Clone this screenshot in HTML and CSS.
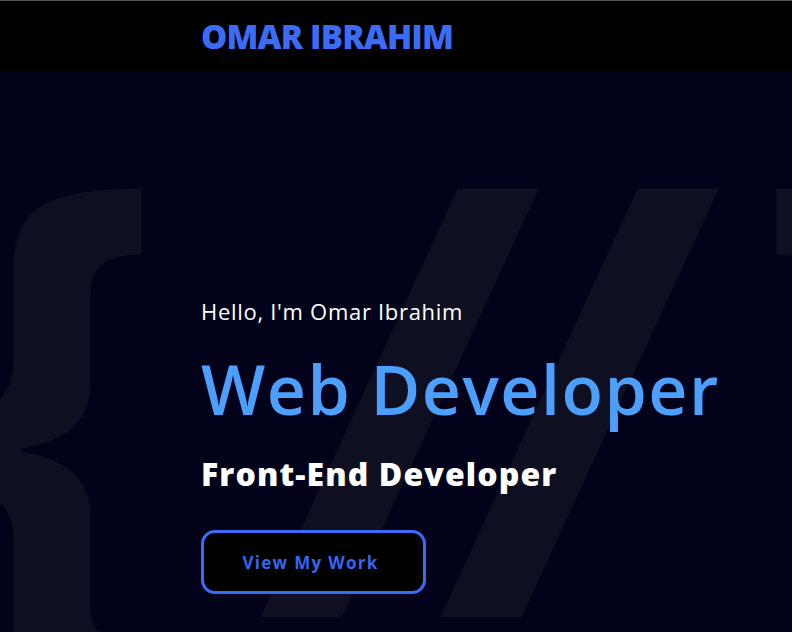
FILE: index.html
```html
<!DOCTYPE html>
<html lang="en">
<head>
<meta charset="utf-8">
<title>Omar Ibrahim</title>
<link rel="stylesheet" href="styles.css">
</head>
<body>
<header class="site-header">
  <div class="container">
    <a class="logo" href="#">OMAR IBRAHIM</a>
  </div>
</header>
<section class="hero">
  <div class="hero-bg" aria-hidden="true"><span class="bg-open">{</span><span class="bg-slash bg-slash-1">/</span><span class="bg-slash bg-slash-2">/</span><span class="bg-close">}</span></div>
  <div class="container hero-content">
    <p class="hello">Hello, I'm Omar Ibrahim</p>
    <h1 class="title">Web Developer</h1>
    <h2 class="subtitle">Front-End Developer</h2>
    <a class="btn" href="#">View My Work</a>
  </div>
</section>
</body>
</html>
```
FILE: styles.css
```css
* { box-sizing: border-box; }
html, body { margin: 0; padding: 0; }
body {
  background: #02021a;
  font-family: "Open Sans", "Noto Sans", sans-serif;
  overflow: hidden;
  height: 632px;
}
.container { padding-left: 201px; }
.site-header {
  background: #000;
  border-top: 1px solid #555;
  height: 71px;
  display: flex;
  align-items: center;
}
.logo {
  color: #3c6cf5;
  font-weight: 800;
  font-size: 33px;
  text-decoration: none;
  letter-spacing: -0.8px;
}
.hero {
  position: relative;
  height: 561px;
  overflow: hidden;
}
.hero-bg {
  position: absolute;
  left: -71px;
  top: 14px;
  font-size: 600px;
  font-weight: 700;
  line-height: 1;
  color: #0e0f20;
  white-space: nowrap;
  pointer-events: none;
}
.bg-slash {
  display: inline-block;
  transform-origin: 0 102px;
  transform: skewX(-5deg);
}
.bg-slash-1 { margin-left: 129px; }
.bg-slash-2 { margin-left: -68px; }
.bg-close { margin-left: 30px; }
.hero-content {
  position: relative;
  padding-top: 224px;
}
.hello {
  margin: 0;
  color: #fff;
  font-size: 22px;
  line-height: 32px;
  letter-spacing: 0.7px;
}
.title {
  margin: 22px 0 0;
  color: #4d9ffe;
  font-size: 68px;
  font-weight: 600;
  line-height: 80px;
  letter-spacing: 1.5px;
}
.subtitle {
  margin: 23px 0 0;
  color: #fff;
  font-size: 32px;
  font-weight: 800;
  line-height: 44px;
  letter-spacing: 1.1px;
}
.btn {
  display: inline-flex;
  align-items: center;
  justify-content: center;
  margin-top: 34px;
  width: 225px;
  height: 64px;
  padding-right: 6px;
  border: 3px solid #3c6cf5;
  border-radius: 14px;
  background: #000;
  color: #3566f0;
  font-size: 17px;
  font-weight: 700;
  letter-spacing: 1.3px;
  text-decoration: none;
}
```
